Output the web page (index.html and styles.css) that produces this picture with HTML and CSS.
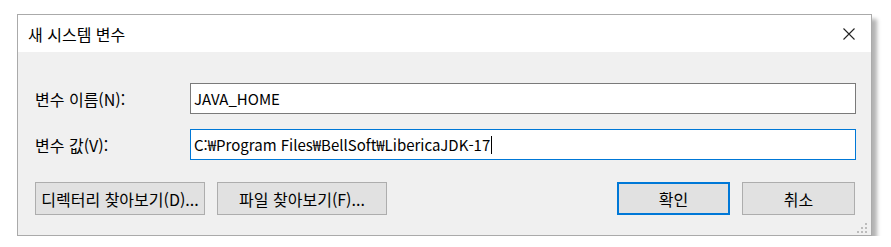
FILE: index.html
```html
<!DOCTYPE html>
<html lang="ko">
<head>
    <meta charset="UTF-8">
    <title>새 시스템 변수</title>
    <link rel="stylesheet" href="styles.css">
</head>
<body>
    <div class="dialog">
        <div class="titlebar">
            <span class="title">새 시스템 변수</span>
            <svg class="close-icon" width="12" height="12" viewBox="0 0 12 12">
                <path d="M0.5 0.5 L11.5 11.5 M11.5 0.5 L0.5 11.5" stroke="#222" stroke-width="1.1" fill="none"/>
            </svg>
        </div>
        <div class="content">
            <div class="field-row">
                <label class="field-label">변수 이름(N):</label>
                <div class="textbox">JAVA_HOME</div>
            </div>
            <div class="field-row">
                <label class="field-label">변수 값(V):</label>
                <div class="textbox focused">C:₩Program Files₩BellSoft₩LibericaJDK-17<span class="caret"></span></div>
            </div>
            <div class="button-row">
                <div class="button-group">
                    <button class="btn wide">디렉터리 찾아보기(D)...</button>
                    <button class="btn wide">파일 찾아보기(F)...</button>
                </div>
                <div class="button-group">
                    <button class="btn default">확인</button>
                    <button class="btn">취소</button>
                </div>
            </div>
            <!-- resize grip -->
            <svg class="gripper" width="12" height="12" viewBox="0 0 12 12">
                <rect x="9" y="1" width="2" height="2" fill="#bcbcbc"/>
                <rect x="5" y="5" width="2" height="2" fill="#bcbcbc"/>
                <rect x="9" y="5" width="2" height="2" fill="#bcbcbc"/>
                <rect x="1" y="9" width="2" height="2" fill="#bcbcbc"/>
                <rect x="5" y="9" width="2" height="2" fill="#bcbcbc"/>
                <rect x="9" y="9" width="2" height="2" fill="#bcbcbc"/>
            </svg>
        </div>
    </div>
</body>
</html>
```

FILE: styles.css
```css
body {
    margin: 0;
    padding: 14px 0 0 17px;
    background-color: #fff;
    font-family: "Noto Sans CJK KR", "Noto Sans", sans-serif;
    font-size: 16px;
    color: #000;
}
.dialog {
    width: 853px;
    border: 1px solid #aaa;
    box-shadow: 5px 5px 4px rgba(0, 0, 0, 0.3);
    background-color: #f0f0f0;
}
.titlebar {
    height: 37px;
    background-color: #fff;
    display: flex;
    align-items: center;
    justify-content: space-between;
    padding: 0 16px 0 10px;
}
.title {
    font-size: 16px;
}
.close-icon {
    display: block;
}
.content {
    position: relative;
    padding: 31px 15px 20px 17px;
}
.field-row {
    display: flex;
    align-items: center;
    margin-bottom: 15px;
}
.field-label {
    width: 155px;
    flex: none;
}
.textbox {
    flex: 1;
    height: 29px;
    border: 1px solid #7a7a7a;
    background-color: #fff;
    display: flex;
    align-items: center;
    padding-left: 3px;
    font-size: 15px;
}
.textbox.focused {
    border-color: #0078d7;
}
.caret {
    display: inline-block;
    width: 1px;
    height: 18px;
    background-color: #000;
    margin-left: 1px;
}
.button-row {
    display: flex;
    justify-content: space-between;
    margin-top: 22px;
    padding-right: 1px;
}
.button-group {
    display: flex;
    gap: 12px;
}
.btn {
    width: 113px;
    height: 33px;
    border: 1px solid #adadad;
    background-color: #e1e1e1;
    font-family: inherit;
    font-size: 16px;
    color: #000;
    padding: 0;
}
.btn.wide {
    width: 170px;
}
.btn.default {
    border: 2px solid #0078d7;
}
.gripper {
    position: absolute;
    right: 3px;
    bottom: 1px;
}
```
